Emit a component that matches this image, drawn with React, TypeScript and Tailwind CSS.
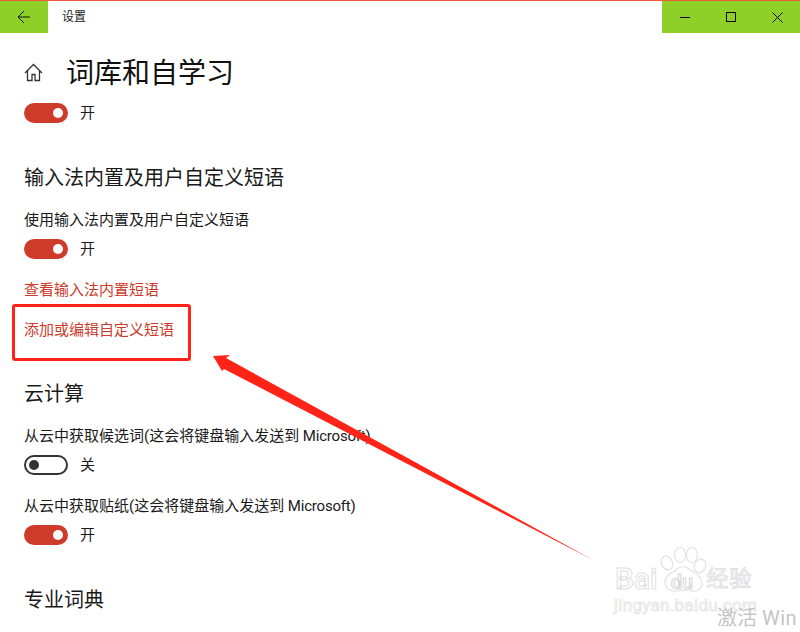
import React from "react";

const font = { fontFamily: 'Roboto, "Noto Sans CJK SC", sans-serif' };

function Toggle({ on, label }: { on: boolean; label: string }) {
  return (
    <div className="flex items-center h-5">
      {on ? (
        <div className="w-11 h-5 rounded-full bg-[#cf3b2a] flex items-center justify-end pr-[5px]">
          <div className="w-2.5 h-2.5 rounded-full bg-white" />
        </div>
      ) : (
        <div className="w-11 h-5 rounded-full border-2 border-[#333333] flex items-center pl-[3px]">
          <div className="w-2.5 h-2.5 rounded-full bg-[#333333]" />
        </div>
      )}
      <span className="ml-3 text-[15px] leading-5 text-[#1a1a1a]">{label}</span>
    </div>
  );
}

export default function App() {
  return (
    <div className="relative w-[800px] h-[632px] overflow-hidden bg-white" style={font}>
      <div className="h-[33px] border-t border-[#f0593c] flex items-start">
        <div className="w-12 h-8 bg-[#8fd028] flex items-center justify-center">
          <svg width="14" height="14" viewBox="0 0 14 14" fill="none" stroke="#111" strokeWidth="1">
            <path d="M13 7H1.5M7 1L1 7l6 6" />
          </svg>
        </div>
        <span className="ml-[14px] h-8 leading-[33px] text-xs text-[#222]">设置</span>
        <div className="ml-auto w-[138px] h-8 bg-[#8fd028] flex items-center">
          <div className="w-[46px] flex justify-center">
            <div className="w-2.5 h-px bg-black" />
          </div>
          <div className="w-[46px] flex justify-center">
            <div className="w-2.5 h-2.5 border border-black" />
          </div>
          <div className="w-[46px] flex justify-center">
            <svg width="11" height="11" viewBox="0 0 11 11" stroke="#000" strokeWidth="1">
              <path d="M.5.5l10 10M10.5.5l-10 10" />
            </svg>
          </div>
        </div>
      </div>

      <div className="pl-6">
        <div className="flex items-center h-10 mt-[19px]">
          <svg width="19" height="19" viewBox="0 0 19 19" fill="none" stroke="#333" strokeWidth="1.3">
            <path d="M1 10L9.5 1.5 18 10M3.5 8v9.5h4.5v-6h3v6h4.5V8" />
          </svg>
          <h1 className="ml-[23px] text-[28px] leading-[44px] h-10 text-[#111] font-normal">词库和自学习</h1>
        </div>
        <div className="mt-[11px]"><Toggle on label="开" /></div>

        <h2 className="mt-[41px] text-xl leading-7 text-[#1a1a1a] font-normal">输入法内置及用户自定义短语</h2>
        <p className="mt-[18px] text-[15px] leading-5 text-[#1a1a1a]">使用输入法内置及用户自定义短语</p>
        <div className="mt-[9px]"><Toggle on label="开" /></div>
        <p className="mt-[21px] text-[15px] leading-5 text-[#cc3a29]">查看输入法内置短语</p>
        <p className="mt-5 text-[15px] leading-5 text-[#cc3a29]">添加或编辑自定义短语</p>

        <h2 className="mt-[40px] text-xl leading-7 text-[#1a1a1a] font-normal">云计算</h2>
        <p className="mt-[18px] text-[15px] leading-5 text-[#1a1a1a]">从云中获取候选词(这会将键盘输入发送到 <span className="tracking-[-0.2px]">Microsoft)</span></p>
        <div className="mt-[9px]"><Toggle on={false} label="关" /></div>
        <p className="mt-[21px] text-[15px] leading-5 text-[#1a1a1a]">从云中获取贴纸(这会将键盘输入发送到 <span className="tracking-[-0.2px]">Microsoft)</span></p>
        <div className="mt-[9px]"><Toggle on label="开" /></div>
        <h2 className="mt-[41px] text-xl leading-7 text-[#1a1a1a] font-normal">专业词典</h2>
      </div>

      {/* annotation box */}
      <div className="absolute left-[12px] top-[304px] w-[179px] h-[57px] border-[3px] border-[#ff2318] rounded-[3px]" />

      {/* annotation arrow */}
      <svg className="absolute left-0 top-0 pointer-events-none" width="800" height="632" viewBox="0 0 800 632">
        <polygon points="213,356 230,355 226,358 593,560 224,369 222,371" fill="#ff2318" />
      </svg>

      {/* watermark paw */}
      <svg className="absolute left-[655px] top-[544px]" width="60" height="56" viewBox="0 0 60 56" fill="none" stroke="#e2e2e2" strokeWidth="1.2">
        <ellipse cx="12" cy="19" rx="5.5" ry="7" transform="rotate(-25 12 19)" />
        <ellipse cx="25" cy="11" rx="5.5" ry="7.5" />
        <ellipse cx="37" cy="11" rx="5.5" ry="7.5" />
        <ellipse cx="45" cy="22" rx="5.5" ry="7" transform="rotate(25 45 22)" />
        <path d="M10 38c0-7 8-9 12-13 4-3 9-3 12 0 4 4 13 6 13 14 0 7-6 9-10 8-5-1-10-1-16 0-5 1-11-2-11-9z" />
      </svg>
      <div className="absolute left-[615px] top-[561px] h-9 flex items-center whitespace-nowrap text-transparent [-webkit-text-stroke:1px_#e0e0e0] select-none">
        <span className="text-[30px] leading-9 font-medium">Bai</span>
        <span className="ml-[13px] mt-[5px] text-[20px] leading-6 font-medium [-webkit-text-stroke:1px_#d8d8d8]">du</span>
        <span className="ml-[13px] text-[22px] leading-7 tracking-[1px]">经验</span>
      </div>
      <span className="absolute left-[614px] top-[593px] text-[17px] leading-6 tracking-[0.3px] text-transparent [-webkit-text-stroke:1px_#e8e8e8] whitespace-nowrap">jingyan.baidu.com</span>
      <span className="absolute left-[717px] top-[604px] text-[20px] leading-7 text-[#c4c4c4] whitespace-nowrap">激活 <span className="tracking-[0.5px]">Win</span></span>
    </div>
  );
}
